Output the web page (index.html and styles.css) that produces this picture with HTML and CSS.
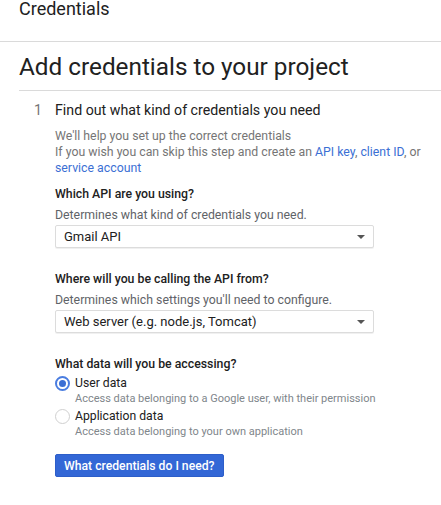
FILE: index.html
```html
<!DOCTYPE html>
<html lang="en">
<head>
<meta charset="utf-8">
<title>Credentials</title>
<link rel="stylesheet" href="styles.css">
</head>
<body>
<header class="topbar">
  <span class="topbar-title">Credentials</span>
</header>
<main class="page">
  <h1 class="page-title">Add credentials to your project</h1>
  <section class="step">
    <div class="step-head">
      <span class="step-num">1</span>
      <span class="step-title">Find out what kind of credentials you need</span>
    </div>
    <div class="step-body">
      <p class="intro">We'll help you set up the correct credentials<br>If you wish you can skip this step and create an <a href="#">API key</a>, <a href="#">client ID</a>, or <a href="#">service account</a></p>

      <div class="field field-first">
        <div class="field-label">Which API are you using?</div>
        <div class="field-help">Determines what kind of credentials you need.</div>
        <div class="select"><span class="select-value">Gmail API</span><span class="caret"></span></div>
      </div>

      <div class="field">
        <div class="field-label">Where will you be calling the API from?</div>
        <div class="field-help">Determines which settings you'll need to configure.</div>
        <div class="select"><span class="select-value">Web server (e.g. node.js, Tomcat)</span><span class="caret"></span></div>
      </div>

      <div class="field">
        <div class="field-label">What data will you be accessing?</div>
        <div class="radio-group">
          <div class="radio-option">
            <span class="radio radio-checked"></span>
            <div class="radio-text">
              <div class="radio-label">User data</div>
              <div class="radio-desc">Access data belonging to a Google user, with their permission</div>
            </div>
          </div>
          <div class="radio-option">
            <span class="radio"></span>
            <div class="radio-text">
              <div class="radio-label">Application data</div>
              <div class="radio-desc">Access data belonging to your own application</div>
            </div>
          </div>
        </div>
      </div>

      <button class="primary-btn" type="button">What credentials do I need?</button>
    </div>
  </section>
</main>
</body>
</html>
```

FILE: styles.css
```css
* { box-sizing: border-box; }

html, body {
  margin: 0;
  padding: 0;
  background: #ffffff;
}

body {
  font-family: Roboto, "Liberation Sans", Arial, sans-serif;
  color: #212121;
  overflow: hidden;
}

.topbar {
  height: 42px;
  border-bottom: 1px solid #dadada;
  padding-left: 19px;
}

.topbar-title {
  display: block;
  font-size: 18px;
  line-height: 18px;
  color: #212121;
}

.page {
  margin-left: 19px;
}

.page-title {
  margin: 10px 0 0;
  padding-bottom: 8px;
  font-size: 24.3px;
  font-weight: 400;
  line-height: 30px;
  color: #212121;
  border-bottom: 1px solid #dadada;
}

.step {
  padding-top: 9px;
}

.step-head {
  display: flex;
  align-items: baseline;
  font-size: 14.2px;
  line-height: 20px;
}

.step-num {
  width: 36px;
  padding-left: 15px;
  color: #757575;
}

.step-title {
  color: #212121;
}

.step-body {
  padding-left: 36px;
}

.intro {
  margin: 8px 0 0;
  font-size: 12.3px;
  line-height: 16px;
  color: #757575;
}

.intro a {
  color: #3b6fd4;
  text-decoration: none;
}

.field {
  margin-top: 23px;
}

.field-first {
  margin-top: 10px;
}

.field-label {
  font-size: 12.3px;
  font-weight: 500;
  line-height: 16px;
  color: #212121;
}

.field-help {
  margin-top: 5px;
  font-size: 12.3px;
  line-height: 16px;
  color: #5f6368;
}

.select {
  margin-top: 2px;
  width: 319px;
  height: 23px;
  display: flex;
  align-items: center;
  justify-content: space-between;
  padding: 0 8px;
  border: 1px solid #dcdcdc;
  border-radius: 2px;
  box-shadow: 0 1px 0 rgba(0,0,0,0.06);
  background: #fff;
}

.select-value {
  font-size: 13px;
  color: #212121;
}

.caret {
  width: 0;
  height: 0;
  border-left: 4px solid transparent;
  border-right: 4px solid transparent;
  border-top: 4px solid #555;
}

.radio-group {
  margin-top: 3px;
}

.radio-option {
  display: flex;
  align-items: flex-start;
}

.radio {
  flex: none;
  width: 15px;
  height: 15px;
  margin-top: 1px;
  margin-right: 5px;
  border-radius: 50%;
  border: 1px solid #d0d0d0;
  background: #fff;
  position: relative;
}

.radio-checked {
  border: 2px solid #4a7de0;
}

.radio-checked::after {
  content: "";
  position: absolute;
  left: 2px;
  top: 2px;
  width: 7px;
  height: 7px;
  border-radius: 50%;
  background: #3b6fd4;
}

.radio-label {
  font-size: 12.2px;
  line-height: 16px;
  color: #212121;
}

.radio-desc {
  font-size: 11px;
  line-height: 15px;
  color: #80868b;
}

.radio-option + .radio-option {
  margin-top: 2px;
}

.primary-btn {
  margin-top: 15px;
  display: block;
  height: 23px;
  padding: 0 8px;
  font-family: Roboto, "Liberation Sans", Arial, sans-serif;
  font-size: 12.2px;
  font-weight: 500;
  color: #ffffff;
  background: #3367d6;
  border: 1px solid #2d5ec9;
  border-radius: 2px;
  cursor: pointer;
}
```
